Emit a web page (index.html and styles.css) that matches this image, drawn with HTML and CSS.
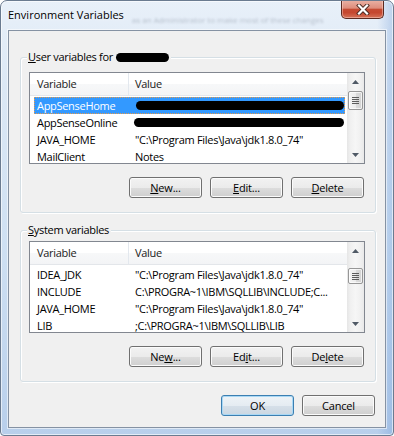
FILE: index.html
```html
<!DOCTYPE html>
<html>
<head>
<meta charset="utf-8">
<title>Environment Variables</title>
<link rel="stylesheet" href="styles.css">
</head>
<body>
<div class="window">
  <div class="titlebar">
    <span class="title">Environment Variables</span>
    <span class="ghost">as an Administrator to make most of these changes</span>
    <button class="close" aria-label="Close">
      <svg width="14" height="11" viewBox="0 0 14 11">
        <path d="M3 1.5 L11 9.5 M11 1.5 L3 9.5" stroke="#4a2a22" stroke-width="4" stroke-linecap="square" fill="none"/>
        <path d="M3 1.5 L11 9.5 M11 1.5 L3 9.5" stroke="#ffffff" stroke-width="2.2" stroke-linecap="square" fill="none"/>
      </svg>
    </button>
  </div>
  <div class="client">
    <div class="group group-user">
      <div class="group-label"><span><u>U</u>ser variables for</span><span class="redact legend-redact"></span></div>
      <div class="listview">
        <div class="lv-main">
          <div class="lv-header">
            <div class="hcol1">Variable</div>
            <div class="hcol2">Value</div>
          </div>
          <div class="lv-rows">
            <div class="row selected"><div class="col1">AppSenseHome</div><div class="col2"><span class="redact redact-row1"></span></div></div>
            <div class="row"><div class="col1">AppSenseOnline</div><div class="col2"><span class="redact redact-row2"></span></div></div>
            <div class="row"><div class="col1">JAVA_HOME</div><div class="col2">"C:\Program Files\Java\jdk1.8.0_74"</div></div>
            <div class="row"><div class="col1">MailClient</div><div class="col2">Notes</div></div>
          </div>
        </div>
        <div class="scrollbar">
          <div class="sb-btn"><svg width="7" height="4" viewBox="0 0 7 4"><path d="M0 4 L3.5 0 L7 4 Z" fill="#505a66"/></svg></div>
          <div class="sb-thumb thumb-user"><span class="grip"></span></div>
          <div class="sb-track"></div>
          <div class="sb-btn"><svg width="7" height="4" viewBox="0 0 7 4"><path d="M0 0 L7 0 L3.5 4 Z" fill="#505a66"/></svg></div>
        </div>
      </div>
      <div class="buttons">
        <button class="btn"><u>N</u>ew...</button>
        <button class="btn"><u>E</u>dit...</button>
        <button class="btn"><u>D</u>elete</button>
      </div>
    </div>

    <div class="group group-system">
      <div class="group-label"><span><u>S</u>ystem variables</span></div>
      <div class="listview">
        <div class="lv-main">
          <div class="lv-header">
            <div class="hcol1">Variable</div>
            <div class="hcol2">Value</div>
          </div>
          <div class="lv-rows">
            <div class="row"><div class="col1">IDEA_JDK</div><div class="col2">"C:\Program Files\Java\jdk1.8.0_74"</div></div>
            <div class="row"><div class="col1">INCLUDE</div><div class="col2">C:\PROGRA~1\IBM\SQLLIB\INCLUDE;C...</div></div>
            <div class="row"><div class="col1">JAVA_HOME</div><div class="col2">"C:\Program Files\Java\jdk1.8.0_74"</div></div>
            <div class="row"><div class="col1">LIB</div><div class="col2">;C:\PROGRA~1\IBM\SQLLIB\LIB</div></div>
          </div>
        </div>
        <div class="scrollbar">
          <div class="sb-btn"><svg width="7" height="4" viewBox="0 0 7 4"><path d="M0 4 L3.5 0 L7 4 Z" fill="#505a66"/></svg></div>
          <div class="sb-thumb thumb-system"><span class="grip"></span></div>
          <div class="sb-track"></div>
          <div class="sb-btn"><svg width="7" height="4" viewBox="0 0 7 4"><path d="M0 0 L7 0 L3.5 4 Z" fill="#505a66"/></svg></div>
        </div>
      </div>
      <div class="buttons">
        <button class="btn">Ne<u>w</u>...</button>
        <button class="btn">Ed<u>i</u>t...</button>
        <button class="btn">De<u>l</u>ete</button>
      </div>
    </div>

    <div class="dialog-buttons">
      <button class="btn btn-default">OK</button>
      <button class="btn">Cancel</button>
    </div>
  </div>
</div>
</body>
</html>
```
FILE: styles.css
```css
* {
  box-sizing: border-box;
  margin: 0;
  padding: 0;
}

html, body {
  width: 394px;
  height: 436px;
  overflow: hidden;
}

body {
  background: #ffffff;
  font-family: "Open Sans", "Noto Sans", sans-serif;
  font-size: 11px;
  color: #000000;
}

.window {
  width: 394px;
  height: 436px;
  display: flex;
  flex-direction: column;
  border: 1px solid #6a7b90;
  border-radius: 7px 7px 4px 4px;
  background:
    linear-gradient(90deg, rgba(255,255,255,0) 0%, rgba(255,255,255,0) 96%, rgba(90,140,210,0.3) 100%),
    linear-gradient(180deg, #e8f0f9 0%, #dce8f5 20%, #cddff2 60%, #b8cfeb 100%);
  box-shadow: inset 0 0 0 1px rgba(255,255,255,0.6);
  overflow: hidden;
}

.titlebar {
  height: 29px;
  display: flex;
  align-items: flex-start;
  flex-shrink: 0;
}

.title {
  margin: 6px 0 0 7px;
  font-size: 11px;
  line-height: 16px;
  color: #000000;
  white-space: nowrap;
  text-shadow: 0 0 6px rgba(255,255,255,0.9);
}

.ghost {
  margin: 14px 0 0 8px;
  white-space: nowrap;
  font-size: 8px;
  line-height: 10px;
  color: rgba(70, 80, 100, 0.3);
  filter: blur(1.2px);
}

.close {
  margin: -1px 9px 0 auto;
  width: 43px;
  height: 19px;
  display: flex;
  align-items: center;
  justify-content: center;
  border: 1px solid #5b2a21;
  border-top: none;
  border-radius: 0 0 5px 5px;
  background: linear-gradient(180deg, #eab3a6 0%, #de8d7c 45%, #c54b33 52%, #c5472f 70%, #d57258 100%);
  box-shadow: inset 0 0 0 1px rgba(255,220,210,0.45);
  flex-shrink: 0;
}

.close svg {
  display: block;
}

.client {
  flex: 1;
  margin: 0 7px 7px 7px;
  border: 1px solid #8592a3;
  background: #f0f0f0;
  display: flex;
  flex-direction: column;
  box-shadow: 0 0 0 1px rgba(255,255,255,0.55);
  letter-spacing: -0.3px;
}

.group {
  position: relative;
  margin: 0 9px 0 11px;
  border: 1px solid #d5dfe5;
  border-radius: 3px;
  padding: 14px 10px 14px 8px;
  box-shadow: inset 1px 1px 0 #ffffff, 1px 1px 0 #ffffff;
}

.group-user {
  margin-top: 26px;
}

.group-system {
  margin-top: 17px;
  padding-top: 10px;
}

.group-label {
  position: absolute;
  top: -8px;
  left: 6px;
  display: flex;
  align-items: center;
  padding: 0 2px 0 1px;
  background: #f0f0f0;
  line-height: 14px;
  white-space: nowrap;
}

.redact {
  display: inline-block;
  background: #000000;
  border-radius: 5px;
  height: 9px;
}

.legend-redact {
  width: 53px;
  margin-left: 3px;
}

.redact-row1 {
  width: 208px;
  margin-left: 1px;
}

.redact-row2 {
  width: 210px;
  margin-left: -1px;
}

.listview {
  height: 92px;
  border: 1px solid #828790;
  background: #ffffff;
  display: flex;
}

.lv-main {
  flex: 1;
  min-width: 0;
  overflow: hidden;
}

.lv-header {
  height: 23px;
  display: flex;
  background: linear-gradient(180deg, #ffffff 0%, #ffffff 50%, #f7f8f9 50%, #f3f4f6 100%);
  border-bottom: 1px solid #e3e6ea;
  line-height: 22px;
  color: #1a1a1a;
}

.hcol1 {
  width: 99px;
  padding-left: 7px;
  border-right: 1px solid #e3e8ee;
}

.hcol2 {
  padding-left: 6px;
}

.lv-rows {
  padding-top: 1px;
}

.row {
  height: 17px;
  margin: 0 2px 0 4px;
  display: flex;
  align-items: center;
  line-height: 17px;
  white-space: nowrap;
}

.row.selected {
  background: #3399ff;
  color: #ffffff;
  outline: 1px dotted #e49a4c;
  outline-offset: -1px;
}

.col1 {
  width: 98px;
  padding-left: 3px;
  flex-shrink: 0;
}

.col2 {
  padding-left: 3px;
  display: flex;
  align-items: center;
}

.scrollbar {
  width: 17px;
  display: flex;
  flex-direction: column;
  background: linear-gradient(90deg, #e6e6e6 0%, #f0f0f0 20%, #f6f6f6 50%, #f0f0f0 80%, #e9e9e9 100%);
  flex-shrink: 0;
}

.sb-btn {
  height: 17px;
  display: flex;
  align-items: center;
  justify-content: center;
  flex-shrink: 0;
}

.sb-btn svg {
  display: block;
}

.sb-thumb {
  margin: 1px 1px 0 1px;
  border: 1px solid #979797;
  border-radius: 2px;
  background: linear-gradient(90deg, #f5f5f5 0%, #ececec 50%, #dcdcdc 51%, #d2d2d2 100%);
  box-shadow: inset 0 0 0 1px rgba(255,255,255,0.7);
  display: flex;
  align-items: center;
  justify-content: center;
  flex-shrink: 0;
}

.thumb-user {
  height: 19px;
}

.thumb-system {
  margin-top: 9px;
  height: 16px;
}

.grip {
  width: 7px;
  height: 7px;
  background: repeating-linear-gradient(180deg, #5d5d5d 0px, #5d5d5d 1px, transparent 1px, transparent 2px);
}

.sb-track {
  flex: 1;
}

.buttons {
  margin-top: 13px;
  display: flex;
  justify-content: flex-end;
  gap: 8px;
  padding-right: 1px;
}

.btn {
  width: 73px;
  height: 21px;
  border: 1px solid #707070;
  border-radius: 3px;
  background: linear-gradient(180deg, #f2f2f2 0%, #ebebeb 50%, #dddddd 50%, #cfcfcf 100%);
  box-shadow: inset 0 0 0 1px #fbfbfb;
  font-family: inherit;
  font-size: 11px;
  letter-spacing: -0.2px;
  line-height: 19px;
  color: #000000;
  text-align: center;
}

.btn-default {
  border-color: #3c7fb1;
  background: linear-gradient(180deg, #eef3f7 0%, #e5ecf2 50%, #d6e0e9 50%, #cbd7e2 100%);
  box-shadow: inset 0 0 0 1px #a9d8f5;
}

.dialog-buttons {
  margin-top: 13px;
  display: flex;
  justify-content: flex-end;
  gap: 8px;
  padding-right: 10px;
}
```
